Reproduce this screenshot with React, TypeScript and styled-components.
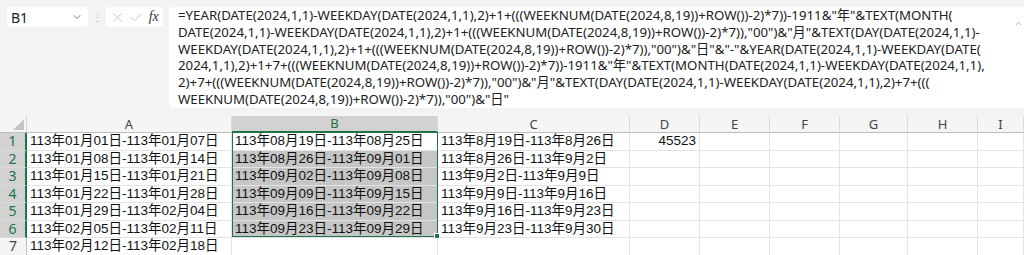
import React from 'react'
import styled, { createGlobalStyle } from 'styled-components'
import { Check, ChevronDown, ChevronUp, X } from 'lucide-react'

const GlobalStyle = createGlobalStyle`
  html, body {
    margin: 0;
    padding: 0;
    background: #f3f3f3;
  }
  #root {
    width: 1024px;
    height: 255px;
    overflow: hidden;
  }
`

const green = '#217346'

const Page = styled.div`
  width: 1024px;
  height: 255px;
  display: flex;
  flex-direction: column;
  background: #f3f3f3;
  font-family: 'Noto Sans', 'Noto Sans CJK TC', sans-serif;
`

const Toolbar = styled.div`
  display: flex;
  align-items: flex-start;
  padding: 7px 0 0 7px;
  height: 109px;
  flex-shrink: 0;
  box-sizing: border-box;
`

const NameBox = styled.div`
  width: 81px;
  height: 20px;
  box-sizing: border-box;
  background: #fff;
  border-radius: 4px;
  display: flex;
  align-items: center;
  justify-content: space-between;
  padding: 0 5px 0 4px;
  font-size: 14px;
  color: #222;
`

const Grip = styled.div`
  width: 18px;
  height: 20px;
  display: flex;
  align-items: center;
  justify-content: center;
  color: #b8b8b8;
  font-size: 11px;
`

const ActionBox = styled.div`
  width: 57px;
  height: 20px;
  background: #fff;
  border-radius: 4px;
  display: flex;
  align-items: center;
  justify-content: space-around;
  padding: 0 2px;
  box-sizing: border-box;
  color: #b4b4b4;
`

const Fx = styled.span`
  font-family: 'Liberation Serif', serif;
  font-style: italic;
  font-size: 14px;
  color: #333;
`

const FormulaBox = styled.div`
  flex: 1;
  margin-left: 6px;
  height: 101px;
  background: #fff;
  border-radius: 4px 0 0 4px;
  display: flex;
  padding-left: 9px;
`

const FormulaText = styled.div`
  flex: 1;
  font-size: 13.25px;
  line-height: 16.8px;
  color: #222;
  white-space: pre;
`

const Collapse = styled.div`
  width: 10px;
  padding-top: 4px;
  color: #888;
`

const Sheet = styled.div`
  flex: 1;
  display: flex;
  flex-direction: column;
  padding-top: 7px;
  position: relative;
`

const cols = '27px 205px 206px 192px 70px 70px 70px 68px 70px 1fr'

const HeaderRow = styled.div`
  display: grid;
  grid-template-columns: ${cols};
  height: 17px;
  flex-shrink: 0;
  background: #f5f5f5;
`

const Corner = styled.div`
  border-right: 1px solid #d4d4d4;
  border-bottom: 1px solid #bdbdbd;
  display: flex;
  align-items: flex-end;
  justify-content: flex-end;
  padding: 0 2px 2px 0;
  box-sizing: border-box;
`

const ColHead = styled.div<{ $sel?: boolean }>`
  display: flex;
  align-items: center;
  justify-content: center;
  font-size: 13px;
  line-height: 15px;
  color: ${p => (p.$sel ? green : '#444')};
  background: ${p => (p.$sel ? '#d2d2d2' : 'transparent')};
  border-right: 1px solid #dadada;
  border-bottom: ${p => (p.$sel ? `2px solid ${green}` : '1px solid #bdbdbd')};
  box-sizing: border-box;
`

const Row = styled.div`
  display: grid;
  grid-template-columns: ${cols};
  grid-template-rows: 17.5px;
  height: 17.5px;
  flex-shrink: 0;
  background: #fff;
`

const RowHead = styled.div<{ $sel?: boolean }>`
  display: flex;
  align-items: center;
  justify-content: center;
  font-size: 14px;
  line-height: 16px;
  color: ${p => (p.$sel ? green : '#444')};
  background: ${p => (p.$sel ? '#d2d2d2' : '#f5f5f5')};
  border-right: ${p => (p.$sel ? `2px solid ${green}` : '1px solid #bdbdbd')};
  border-bottom: 1px solid #dadada;
  box-sizing: border-box;
`

const Cell = styled.div<{ $sel?: boolean; $num?: boolean }>`
  display: flex;
  align-items: center;
  justify-content: ${p => (p.$num ? 'flex-end' : 'flex-start')};
  padding: 0 3px;
  font-family: 'Liberation Sans', 'Noto Sans CJK TC', sans-serif;
  font-size: 13.5px;
  line-height: 16px;
  color: #111;
  white-space: nowrap;
  background: ${p => (p.$sel ? '#c6c6c6' : '#fff')};
  border-right: 1px solid #e3e3e3;
  border-bottom: 1px solid #e3e3e3;
  box-sizing: border-box;
  min-width: 0;
`

const Selection = styled.div`
  position: absolute;
  left: 232px;
  top: 23px;
  width: 206px;
  height: 105px;
  border: 1px solid ${green};
  box-sizing: border-box;
  pointer-events: none;

  &::after {
    content: '';
    position: absolute;
    right: -3px;
    bottom: -3px;
    width: 4px;
    height: 4px;
    background: ${green};
    border: 1px solid #fff;
  }
`

const formula = [
  '=YEAR(DATE(2024,1,1)-WEEKDAY(DATE(2024,1,1),2)+1+(((WEEKNUM(DATE(2024,8,19))+ROW())-2)*7))-1911&"年"&TEXT(MONTH(',
  'DATE(2024,1,1)-WEEKDAY(DATE(2024,1,1),2)+1+(((WEEKNUM(DATE(2024,8,19))+ROW())-2)*7)),"00")&"月"&TEXT(DAY(DATE(2024,1,1)-',
  'WEEKDAY(DATE(2024,1,1),2)+1+(((WEEKNUM(DATE(2024,8,19))+ROW())-2)*7)),"00")&"日"&"-"&YEAR(DATE(2024,1,1)-WEEKDAY(DATE(',
  '2024,1,1),2)+1+7+(((WEEKNUM(DATE(2024,8,19))+ROW())-2)*7))-1911&"年"&TEXT(MONTH(DATE(2024,1,1)-WEEKDAY(DATE(2024,1,1),',
  '2)+7+(((WEEKNUM(DATE(2024,8,19))+ROW())-2)*7)),"00")&"月"&TEXT(DAY(DATE(2024,1,1)-WEEKDAY(DATE(2024,1,1),2)+7+(((',
  'WEEKNUM(DATE(2024,8,19))+ROW())-2)*7)),"00")&"日"',
]

const columns = ['A', 'B', 'C', 'D', 'E', 'F', 'G', 'H', 'I']

const colA = [
  '113年01月01日-113年01月07日',
  '113年01月08日-113年01月14日',
  '113年01月15日-113年01月21日',
  '113年01月22日-113年01月28日',
  '113年01月29日-113年02月04日',
  '113年02月05日-113年02月11日',
  '113年02月12日-113年02月18日',
]

const colB = [
  '113年08月19日-113年08月25日',
  '113年08月26日-113年09月01日',
  '113年09月02日-113年09月08日',
  '113年09月09日-113年09月15日',
  '113年09月16日-113年09月22日',
  '113年09月23日-113年09月29日',
  '',
]

const colC = [
  '113年8月19日-113年8月26日',
  '113年8月26日-113年9月2日',
  '113年9月2日-113年9月9日',
  '113年9月9日-113年9月16日',
  '113年9月16日-113年9月23日',
  '113年9月23日-113年9月30日',
  '',
]

export default function App() {
  return (
    <Page>
      <GlobalStyle />
      <Toolbar>
        <NameBox>
          <span>B1</span>
          <ChevronDown size={12} strokeWidth={1.5} color="#555" />
        </NameBox>
        <Grip>⋮</Grip>
        <ActionBox>
          <X size={15} strokeWidth={1.2} />
          <Check size={15} strokeWidth={1.2} />
          <Fx>fx</Fx>
        </ActionBox>
        <FormulaBox>
          <FormulaText>{formula.join('\n')}</FormulaText>
          <Collapse>
            <ChevronUp size={9} strokeWidth={1.5} />
          </Collapse>
        </FormulaBox>
      </Toolbar>

      <Sheet>
        <HeaderRow>
          <Corner>
            <svg width="11" height="11" viewBox="0 0 11 11">
              <polygon points="11,0 11,11 0,11" fill="#c4c4c4" />
            </svg>
          </Corner>
          {columns.map(c => (
            <ColHead key={c} $sel={c === 'B'}>
              {c}
            </ColHead>
          ))}
        </HeaderRow>
        {colA.map((a, i) => {
          const inSel = i < 6
          return (
            <Row key={i}>
              <RowHead $sel={inSel}>{i + 1}</RowHead>
              <Cell>{a}</Cell>
              <Cell $sel={inSel && i > 0}>{colB[i]}</Cell>
              <Cell>{colC[i]}</Cell>
              <Cell $num>{i === 0 ? '45523' : ''}</Cell>
              <Cell />
              <Cell />
              <Cell />
              <Cell />
              <Cell />
            </Row>
          )
        })}
        <Selection />
      </Sheet>
    </Page>
  )
}
